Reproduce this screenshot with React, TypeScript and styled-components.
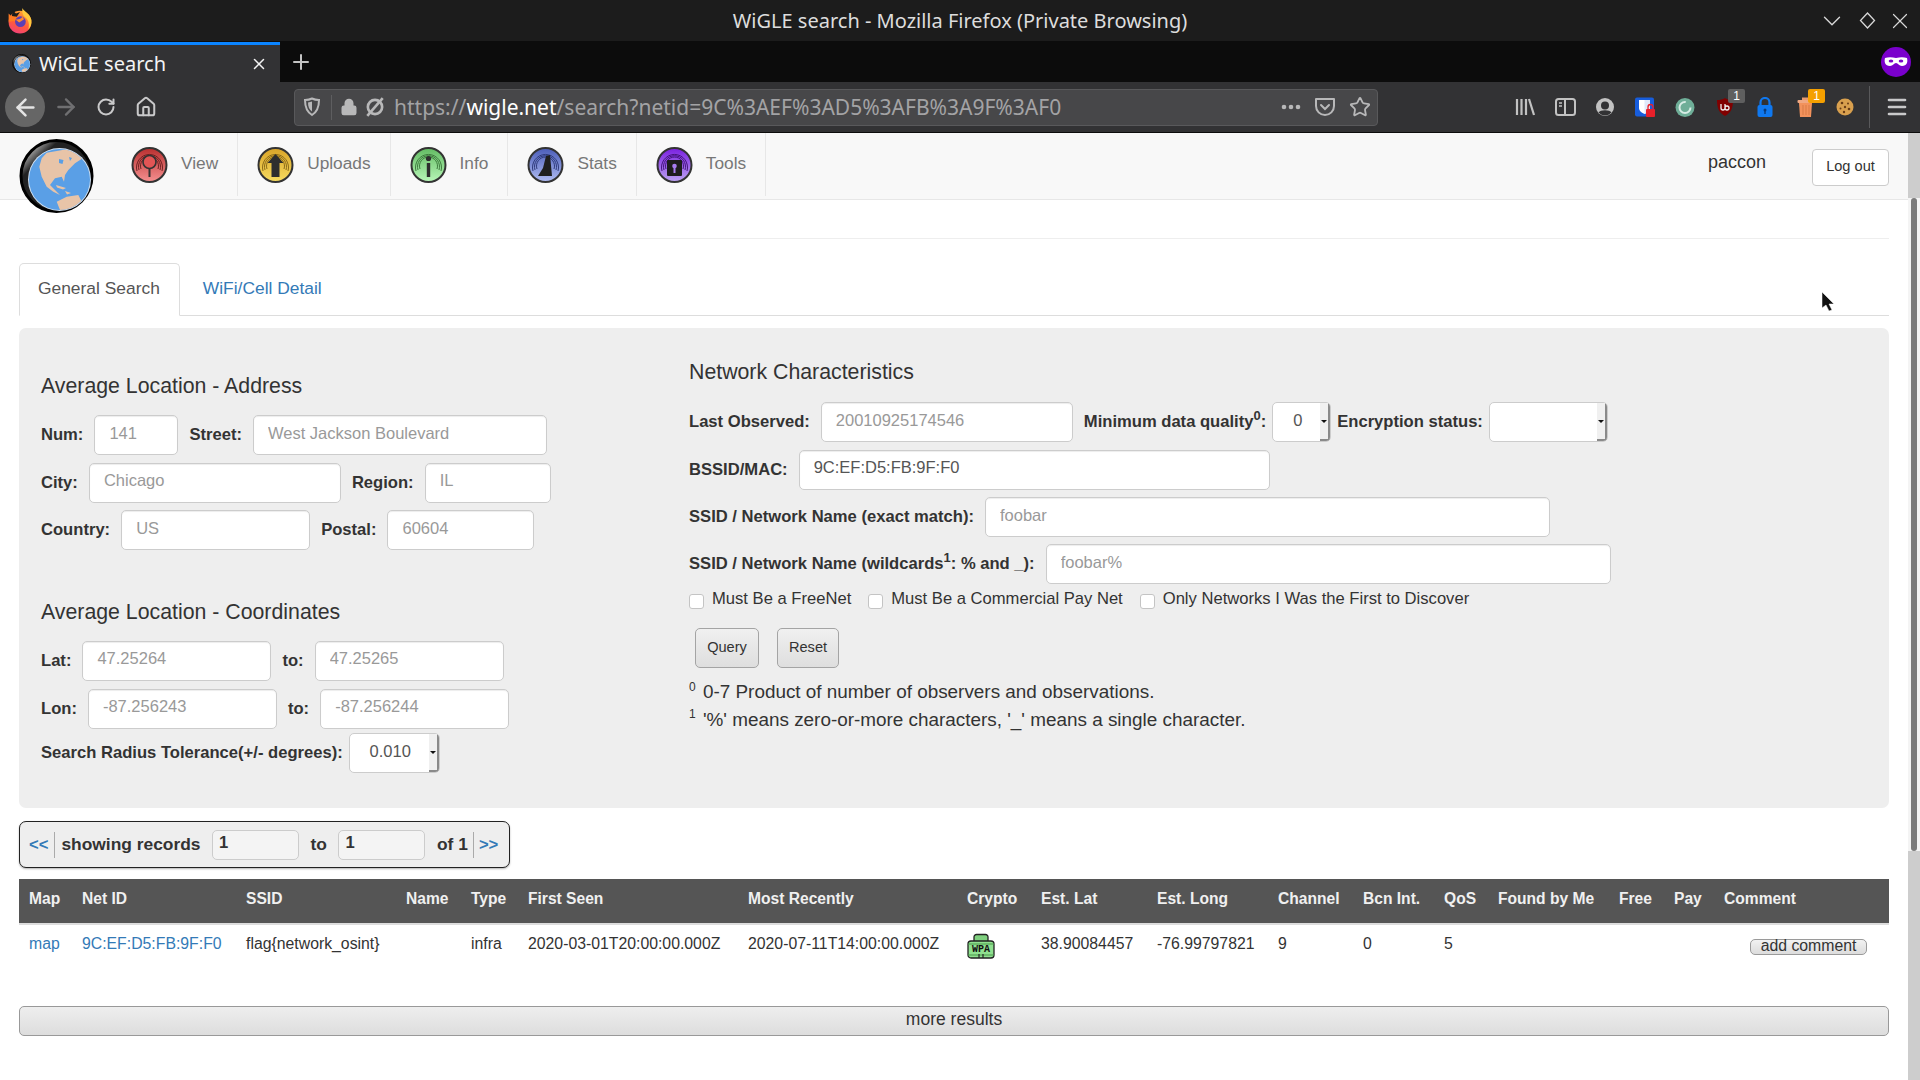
import React, { FC } from "react";
import styled, { createGlobalStyle } from "styled-components";
import { ArrowLeft, ArrowRight, RotateCw, Home, Star, X, Plus, Menu, Lock, ChevronDown } from "lucide-react";

const GlobalStyle = createGlobalStyle`
  html, body {
    margin: 0;
    padding: 0;
    height: 100%;
    overflow: hidden;
    background: #fff;
  }
  * { box-sizing: border-box; }
`;

const Win = styled.div`
  width: 1920px;
  height: 1080px;
  display: flex;
  flex-direction: column;
  overflow: hidden;
  font-family: "Liberation Sans", Arial, sans-serif;
  color: #333;
`;

/* ---------- browser chrome ---------- */
const TitleBar = styled.div`
  height: 41px;
  flex: none;
  background: #1c1c1c;
  display: grid;
  grid-template-columns: 200px 1fr 200px;
  align-items: center;
  color: #ddd;
  font-family: "Noto Sans", sans-serif;
  font-size: 20px;
`;

const TitleText = styled.div`
  text-align: center;
`;

const FoxSlot = styled.div`
  display: flex;
  padding-left: 7px;
  padding-bottom: 1px;
`;

const WinControls = styled.div`
  display: flex;
  justify-content: flex-end;
  align-items: center;
  gap: 11.5px;
  padding-right: 7px;
  color: #d8d8d8;
`;

const TabBar = styled.div`
  height: 41px;
  flex: none;
  background: #0c0c0c;
  display: flex;
  align-items: stretch;
`;

const ActiveTab = styled.div`
  width: 280px;
  margin-top: 1px;
  background: #323234;
  border-top: 3px solid #0a84ff;
  display: flex;
  align-items: center;
  padding: 0 12px;
  gap: 8px;
  color: #f4f4f4;
  font-family: "Noto Sans", sans-serif;
  font-size: 20px;
`;

const TabTitle = styled.span`
  flex: 1;
`;

const NewTab = styled.div`
  width: 42px;
  display: flex;
  align-items: center;
  justify-content: center;
  color: #c4c4c4;
`;

const TabSpacer = styled.div`
  flex: 1;
`;

const MaskSlot = styled.div`
  display: flex;
  align-items: center;
  padding-right: 9px;
`;

const ToolBar = styled.div`
  height: 51px;
  flex: none;
  background: #323234;
  border-bottom: 1px solid #0c0c0c;
  display: flex;
  align-items: center;
  padding-left: 5px;
`;

const ToolSlot = styled.div<{ $round?: boolean; $dim?: boolean }>`
  width: 40px;
  height: 40px;
  flex: none;
  display: flex;
  align-items: center;
  justify-content: center;
  position: relative;
  border-radius: 50%;
  margin-right: ${(p) => (p.$round ? "1px" : "0")};
  background: ${(p) => (p.$round ? "#666" : "transparent")};
  color: ${(p) => (p.$round ? "#e4e4e4" : p.$dim ? "#6f6f71" : "#c9c9ca")};
`;

const UrlBar = styled.div`
  width: 1084px;
  height: 37px;
  margin-left: 128px;
  flex: none;
  background: #474749;
  border: 1px solid #59595b;
  border-radius: 4px;
  display: flex;
  align-items: center;
  padding-left: 8px;
  color: #b8b8b9;
`;

const UrlDivider = styled.div`
  width: 1px;
  height: 25px;
  background: #5e5e60;
  margin: 0 8px 0 10px;
`;

const UrlIcons = styled.div`
  display: flex;
  gap: 6px;
  align-items: center;
  margin-right: 8px;
`;

const UrlText = styled.div`
  flex: 1;
  font-family: "Noto Sans", sans-serif;
  font-size: 21px;
  color: #a3a3a5;
  white-space: nowrap;
`;

const UrlHost = styled.span`
  color: #fff;
`;

const UrlActions = styled.div`
  display: flex;
  align-items: center;
  gap: 13px;
  padding-right: 6px;
`;

const ToolSpacer = styled.div`
  width: 127px;
  flex: none;
`;

const ToolDivider = styled.div`
  width: 1px;
  height: 42px;
  background: #59595b;
  margin: 0 7px 0 4px;
  flex: none;
`;

const Badge = styled.span<{ $bg: string }>`
  position: absolute;
  top: 2px;
  right: 0;
  width: 17px;
  height: 14px;
  border-radius: 2px;
  background: ${(p) => p.$bg};
  color: #fff;
  font-size: 12px;
  line-height: 14px;
  text-align: center;
`;

/* ---------- page ---------- */
const PageArea = styled.div`
  flex: 1;
  display: flex;
  min-height: 0;
  position: relative;
`;

const Content = styled.div`
  flex: 1;
  min-width: 0;
`;

const ScrollTrack = styled.div`
  width: 12px;
  flex: none;
  display: flex;
  flex-direction: column;
  background: #cdcdcd;
`;

const ScrollBody = styled.div`
  margin-top: 65px;
  height: 653px;
  background: #f4f4f4;
  display: flex;
  justify-content: center;
`;

const ScrollThumb = styled.div`
  width: 6px;
  background: #7b7b7b;
  border-radius: 3px;
`;

const NavBar = styled.div`
  height: 67px;
  background: #f8f8f8;
  border-bottom: 1px solid #e7e7e7;
  display: flex;
  padding-left: 112px;
  padding-right: 19px;
  position: relative;
`;

const LogoOver = styled.div`
  position: absolute;
  left: 19px;
  top: 6px;
  width: 75px;
  height: 75px;
`;

const NavItem = styled.div`
  height: 63px;
  display: flex;
  align-items: center;
  gap: 13px;
  padding: 0 19px;
  border-right: 1px solid #e7e7e7;
  color: #777;
  font-size: 17.3px;
`;

const NavLabel = styled.span`
  margin-bottom: 3px;
`;

const NavSpacer = styled.div`
  flex: 1;
`;

const UserName = styled.div`
  font-size: 18px;
  color: #333;
  align-self: center;
  margin: 0 46px 7px 0;
`;

const LogoutButton = styled.button`
  align-self: flex-start;
  margin-top: 16px;
  width: 77px;
  height: 37px;
  background: #fff;
  border: 1px solid #ccc;
  border-radius: 4px;
  font: 14.6px "Liberation Sans", Arial, sans-serif;
  color: #333;
  padding: 0 0 3px;
`;

const Main = styled.div`
  padding: 38px 19px 0;
`;

const Rule = styled.div`
  height: 1px;
  background: #eee;
`;

const Tabs = styled.div`
  margin-top: 24px;
  height: 53px;
  border-bottom: 1px solid #ddd;
  display: flex;
`;

const TabLink = styled.div<{ $active?: boolean }>`
  height: 53px;
  padding: 0 19px 2px 18px;
  display: flex;
  align-items: center;
  font-size: 17.4px;
  color: ${(p) => (p.$active ? "#555" : "#337ab7")};
  background: ${(p) => (p.$active ? "#fff" : "transparent")};
  border: 1px solid ${(p) => (p.$active ? "#ddd" : "transparent")};
  border-bottom-color: ${(p) => (p.$active ? "#fff" : "transparent")};
  border-radius: 5px 5px 0 0;
  margin-right: 4px;
`;

const Panel = styled.div`
  margin-top: 12px;
  height: 480px;
  background: #eee;
  border-radius: 7px;
  display: flex;
  padding-left: 22px;
`;

const LeftCol = styled.div`
  width: 648px;
  flex: none;
  padding-top: 46px;
`;

const RightCol = styled.div`
  flex: 1;
  padding-top: 32px;
`;

const Heading = styled.h4<{ $above?: number; $below?: number }>`
  margin: ${(p) => p.$above ?? 0}px 0 ${(p) => p.$below ?? 17}px;
  font-size: 21.3px;
  line-height: 24px;
  font-weight: 400;
  color: #333;
`;

const FormRow = styled.div<{ $below?: number }>`
  display: flex;
  align-items: center;
  height: 40px;
  gap: 11px;
  margin-bottom: ${(p) => p.$below ?? 7.7}px;
`;

const TightGroup = styled.div`
  display: flex;
  align-items: center;
  gap: 6px;
`;

const Label = styled.label`
  font-size: 16.6px;
  font-weight: 700;
  color: #333;
  white-space: nowrap;
`;

const Sup = styled.sup`
  font-size: 13px;
  line-height: 0;
`;

const NoteSup = styled(Sup)`
  font-size: 12px;
  margin-right: 2px;
`;

const TextInput = styled.input<{ $w: number }>`
  width: ${(p) => p.$w}px;
  height: 40px;
  flex: none;
  background: #fff;
  border: 1px solid #ccc;
  border-radius: 5px;
  box-shadow: inset 0 1px 1px rgba(0, 0, 0, 0.075);
  padding: 0 14px 4px;
  font: 16.5px "Liberation Sans", Arial, sans-serif;
  color: #555;
  &::placeholder {
    color: #999;
    opacity: 1;
  }
`;

const SelectBox = styled.div<{ $w: number }>`
  width: ${(p) => p.$w}px;
  height: 40px;
  flex: none;
  background: #fff;
  border: 1px solid #ccc;
  border-radius: 5px;
  display: flex;
  align-items: center;
  font-size: 16.5px;
  color: #555;
  overflow: hidden;
`;

const SelectValue = styled.span`
  flex: 1;
  text-align: center;
  padding: 0 0 4px 2px;
`;

const SelectArrow = styled.span`
  width: 10px;
  height: 100%;
  flex: none;
  background: #f0f0f0;
  border-right: 2px solid #8a8a8a;
  border-bottom: 2px solid #8a8a8a;
  display: flex;
  align-items: center;
  justify-content: center;
  &::after {
    content: "";
    border-left: 3px solid transparent;
    border-right: 3px solid transparent;
    border-top: 3px solid #111;
  }
`;

const CheckRow = styled.div`
  display: flex;
  align-items: flex-start;
  height: 20px;
  margin-top: 1px;
`;

const CheckBox = styled.input.attrs({ type: "checkbox" })`
  appearance: none;
  width: 15px;
  height: 15px;
  margin: 5px 8px 0 0;
  flex: none;
  background: #fff;
  border: 1px solid #c4c4c4;
  border-radius: 3px;
`;

const CheckLabel = styled.span`
  font-size: 16.6px;
  line-height: 19px;
  color: #333;
  margin-right: 17px;
`;

const ButtonRow = styled.div`
  display: flex;
  gap: 18px;
  margin: 19px 0 10px 6px;
`;

const FormButton = styled.button<{ $w: number }>`
  width: ${(p) => p.$w}px;
  height: 40px;
  padding: 0 0 3px;
  background: linear-gradient(#f0f0f0, #dedede);
  border: 1px solid #a4a4a4;
  border-radius: 5px;
  font: 14.6px "Liberation Sans", Arial, sans-serif;
  color: #333;
`;

const Note = styled.div`
  font-size: 18.9px;
  line-height: 27.5px;
  color: #333;
`;

const Pager = styled.div`
  margin-top: 13px;
  width: 491px;
  height: 47px;
  background: #eee;
  border: 1px solid #222;
  border-radius: 7px;
  box-shadow: 0 1px 2px rgba(0, 0, 0, 0.3);
  display: flex;
  align-items: center;
  padding-left: 9px;
  font-size: 17.4px;
  font-weight: 700;
  color: #333;
`;

const PagerLink = styled.span`
  color: #337ab7;
  font-size: 16.6px;
`;

const PagerSep = styled.span<{ $side: "left" | "right" }>`
  width: 1px;
  height: 26px;
  background: #aaa;
  margin: ${(p) => (p.$side === "left" ? "0 6px" : "0 5px")};
`;

const PagerInput = styled.input`
  width: 87px;
  height: 30px;
  margin: 0 11.5px;
  background: #f4f4f4;
  border: 1px solid #ccc;
  border-radius: 5px;
  padding: 0 6px 3px;
  font: 700 16.6px "Liberation Sans", Arial, sans-serif;
  color: #333;
`;

const ResultTable = styled.table`
  margin-top: 11px;
  width: 1870px;
  table-layout: fixed;
  border-collapse: collapse;
  font-size: 15.8px;
`;

const HeadRow = styled.tr`
  height: 45px;
  background: #555;
  border-bottom: 2px solid #ddd;
`;

const Th = styled.th`
  padding: 0 0 4px 10px;
  text-align: left;
  font-size: 15.6px;
  font-weight: 700;
  color: #f0f0f0;
  white-space: nowrap;
`;

const BodyRow = styled.tr`
  height: 70px;
`;

const Td = styled.td`
  padding: 10px 0 0 10px;
  vertical-align: top;
  color: #333;
  white-space: nowrap;
  line-height: 18px;
`;

const IconCell = styled(Td)`
  padding-top: 8px;
`;

const CommentCell = styled(Td)`
  padding: 14px 22px 0 0;
  text-align: right;
`;

const CellLink = styled.span`
  color: #337ab7;
`;

const CommentButton = styled.button`
  display: inline-block;
  vertical-align: top;
  width: 117px;
  height: 16px;
  padding: 0 0 5px;
  background: linear-gradient(#f2f2f2, #dcdcdc);
  border: 1px solid #9a9a9a;
  border-radius: 5px;
  font: 15.8px/12px "Liberation Sans", Arial, sans-serif;
  color: #333;
`;

const MoreButton = styled.button`
  display: block;
  width: 100%;
  height: 30px;
  margin-top: 12px;
  padding: 0 0 4px;
  background: linear-gradient(#eee, #ddd);
  border: 1px solid #999;
  border-radius: 5px;
  font: 17.5px "Liberation Sans", Arial, sans-serif;
  color: #333;
`;

const Cursor = styled.svg`
  position: absolute;
  left: 1821px;
  top: 159px;
`;

/* ---------- drawings ---------- */
const FirefoxLogo: FC = () => (
  <svg width="26" height="27" viewBox="0 0 32 33">
    <defs>
      <linearGradient id="ffBody" x1="0.7" y1="0" x2="0.3" y2="1">
        <stop offset="0" stopColor="#ffa930" />
        <stop offset="0.6" stopColor="#ff5a3c" />
        <stop offset="1" stopColor="#f0407a" />
      </linearGradient>
    </defs>
    <circle cx="16" cy="18.5" r="14" fill="url(#ffBody)" />
    <path d="M19 1c1 4 10 7 11 15 .6 5-1 9-4 12 2-6 1-12-3-15-3-2-5-6-4-12z" fill="#ffc93c" />
    <path d="M2 8l3 3 3-3 2 4 5-3-5 8-8 1z" fill="#ff7a22" />
    <path d="M7 4l4 4 5-2-4 6-6-1z" fill="#1c1c1c" />
    <circle cx="16.5" cy="18" r="6.6" fill="#5b3fb5" />
    <path d="M10 15c3 1 7 0 9-3l2 3-6 4z" fill="#ff8a2c" />
  </svg>
);

const Globe: FC<{ size: number }> = ({ size }) => (
  <svg width={size} height={size} viewBox="0 0 75 75">
    <defs>
      <linearGradient id={`shine${size}`} x1="0" y1="0" x2="0.7" y2="0.7">
        <stop offset="0" stopColor="#111" />
        <stop offset="0.22" stopColor="#999" />
        <stop offset="0.38" stopColor="#222" />
      </linearGradient>
      <clipPath id={`sea${size}`}>
        <circle cx="40.5" cy="40.5" r="30.5" />
      </clipPath>
    </defs>
    <circle cx="37.5" cy="37" r="35.5" fill={`url(#shine${size})`} stroke="#000" strokeWidth="3" />
    <circle cx="40.5" cy="40.5" r="31.5" fill="#cfe0f2" />
    <g clipPath={`url(#sea${size})`}>
      <rect x="0" y="0" width="75" height="75" fill="#5a9fe6" />
      <path
        d="M27.7 13.7L47.7 10.3L59.3 11.7L63.7 19.3L56 24.3L49.3 31L46 36L45 42.7L42.7 37.7L36 39.3L31 46L36 51L41 56L34.3 52.7L27.7 47.7L22.7 37.7L20.3 27.7L22.7 19.3Z"
        fill="#e8c4a8"
      />
      <path d="M40 20L44.5 21L43.5 25L40 24ZM50 18L53 19L51 22Z" fill="#5a9fe6" />
      <path d="M37 46L47 49L44 50.5L38 48.5ZM46 52L52 54L48 55.5Z" fill="#e8c4a8" />
      <path d="M37.7 62.7L47.7 57.7L59.3 56L62.7 62.7L51 71L41 71Z" fill="#e8c4a8" />
    </g>
  </svg>
);

const NavIcon: FC<{ id: string; top: string; bottom: string; arc: string; children: React.ReactNode }> = ({
  id,
  top,
  bottom,
  arc,
  children,
}) => (
  <svg width="37" height="36" viewBox="0 0 37 36">
    <defs>
      <linearGradient id={id} x1="0" y1="0" x2="0" y2="1">
        <stop offset="0" stopColor={top} />
        <stop offset="1" stopColor={bottom} />
      </linearGradient>
    </defs>
    <circle cx="18.5" cy="18" r="17" fill={`url(#${id})`} stroke="#333" strokeWidth="2" />
    <g fill="none" stroke={arc} strokeWidth="1">
      <path d="M6 24a13 13 0 1 1 25 0" />
      <path d="M8 23a11 11 0 1 1 21 0" />
      <path d="M10 22a9 9 0 1 1 17 0" />
    </g>
    {children}
  </svg>
);

const ViewGlyph = () => (
  <g fill="none" stroke="#333" strokeWidth="1.6">
    <circle cx="18.5" cy="15" r="6.5" fill="#e25555" />
    <path d="M18.5 21.5V30" strokeWidth="2" />
  </g>
);
const UploadGlyph = () => <path d="M18.5 7l8 9h-4v14h-8V16h-4z" fill="#2e2e2e" />;
const InfoGlyph = () => (
  <g fill="#2e2e2e">
    <circle cx="18.5" cy="11.5" r="2.6" />
    <rect x="16.8" y="16" width="3.4" height="14" />
  </g>
);
const StatsGlyph = () => <path d="M11 29l5-8 3-12 4-1 2 21z" fill="#1f1f1f" />;
const ToolsGlyph = () => (
  <g>
    <rect x="11" y="13" width="15" height="16" rx="1" fill="#1d1d1d" />
    <circle cx="18.5" cy="19" r="2.3" fill="#a77cf0" />
    <rect x="17.5" y="20" width="2" height="6" fill="#a77cf0" />
  </g>
);

const ShieldIcon = () => (
  <svg width="18" height="20" viewBox="0 0 18 20" fill="none">
    <path d="M9 1.5c2 1 5 1.5 7 1.5 0 8-2 12-7 15-5-3-7-7-7-15 2 0 5-.5 7-1.5z" stroke="#b8b8b9" strokeWidth="2" />
    <path d="M9 4.5v10c-3-2-4-5-4-9z" fill="#b8b8b9" />
  </svg>
);

const BrokenLink = () => (
  <svg width="22" height="22" viewBox="0 0 20 20" fill="none" stroke="#b8b8b9" strokeWidth="2.4">
    <circle cx="10" cy="10" r="6.5" />
    <path d="M3 18L17 2" />
  </svg>
);

const PocketIcon = () => (
  <svg width="22" height="20" viewBox="0 0 22 20" fill="none" stroke="#b8b8b9" strokeWidth="2">
    <path d="M2 2h18v7c0 5-4 9-9 9s-9-4-9-9z" strokeLinejoin="round" />
    <path d="M7 8l4 4 4-4" strokeLinecap="round" />
  </svg>
);

const LibraryIcon = () => (
  <svg width="21" height="20" viewBox="0 0 21 20" fill="none" stroke="#c2c2c2" strokeWidth="2.2">
    <path d="M2 2v16M6.5 2v16M11 2v16M14 2l5 16" />
  </svg>
);

const SidebarIcon = () => (
  <svg width="21" height="20" viewBox="0 0 21 20" fill="none" stroke="#c2c2c2" strokeWidth="2">
    <rect x="1" y="2" width="19" height="16" rx="2.5" />
    <path d="M10 2v16" />
    <path d="M4 6h3M4 9h3" strokeWidth="1.4" />
  </svg>
);

const AccountIcon = () => (
  <svg width="20" height="20" viewBox="0 0 20 20">
    <circle cx="10" cy="10" r="9" fill="#c2c2c2" />
    <circle cx="10" cy="8.5" r="4" fill="#323234" />
    <path d="M3.5 15.5c2-3 11-3 13 0-2 2-4 3-6.5 3s-4.5-1-6.5-3z" fill="#323234" />
  </svg>
);

const BitwardenIcon = () => (
  <svg width="22" height="21" viewBox="0 0 22 21">
    <rect x="1" y="0.5" width="19" height="19" rx="2" fill="#175ddc" />
    <path d="M5 3h11v8c0 3-3 5-5.5 6C8 16 5 14 5 11z" fill="#fff" />
    <path d="M10.5 3h5.5v8c0 3-3 5-5.5 6z" fill="#dfe9fb" />
    <rect x="12" y="12" width="9" height="8" rx="1" fill="#e8202a" />
    <path d="M14 12V10a2.5 2.5 0 0 1 5 0v2" fill="none" stroke="#e8202a" strokeWidth="1.3" />
  </svg>
);

const GreenRing = () => (
  <svg width="20" height="21" viewBox="0 0 20 21" fill="none">
    <circle cx="10" cy="10.5" r="9.5" fill="#6fae98" />
    <circle cx="10" cy="10.5" r="5.5" stroke="#d8ece5" strokeWidth="2" strokeDasharray="26 8" />
  </svg>
);

const UblockIcon = () => (
  <svg width="18" height="20" viewBox="0 0 18 20">
    <path d="M9 1c2 1.5 5 2 8 2 0 8-2 13-8 16C3 16 1 11 1 3c3 0 6-.5 8-2z" fill="#800000" />
    <path d="M5 7v4a2 2 0 0 0 4 0V7M9 11a2 2 0 1 0 4 0 2 2 0 1 0-4 0" fill="none" stroke="#eee" strokeWidth="1.3" />
  </svg>
);

const BlueLock = () => (
  <svg width="16" height="20" viewBox="0 0 16 20">
    <path d="M3.5 9V5.5a4.5 4.5 0 0 1 9 0V9" fill="none" stroke="#0f78f0" strokeWidth="2.2" />
    <rect x="0.5" y="8" width="15" height="12" rx="2" fill="#0f78f0" />
    <circle cx="8" cy="13" r="1.5" fill="#0a3a78" />
    <rect x="7.3" y="13" width="1.4" height="4" fill="#0a3a78" />
  </svg>
);

const TrashIcon = () => (
  <svg width="17" height="20" viewBox="0 0 17 20">
    <rect x="5" y="0.5" width="7" height="3" fill="#e89a70" />
    <rect x="0.5" y="3" width="16" height="3" rx="1" fill="#f0a882" />
    <path d="M2 6h13l-1 14H3z" fill="#f2925c" />
    <path d="M6 8v10M9 8v10M12 8v10" stroke="#d87a44" strokeWidth="1" />
  </svg>
);

const CookieIcon = () => (
  <svg width="18" height="18" viewBox="0 0 18 18">
    <circle cx="9" cy="9" r="8.5" fill="#d9a04e" />
    <g fill="#6a3d16">
      <circle cx="6" cy="5" r="1.3" />
      <circle cx="12" cy="5.5" r="1" />
      <circle cx="9" cy="9" r="1.2" />
      <circle cx="4.5" cy="10.5" r="1" />
      <circle cx="13" cy="11" r="1.3" />
      <circle cx="8" cy="14" r="1.2" />
    </g>
  </svg>
);

const MaskIcon = () => (
  <svg width="30" height="30" viewBox="0 0 30 30">
    <circle cx="15" cy="15" r="15" fill="#7a00cc" />
    <path d="M4 11c3-1 7-1 11 0 4-1 8-1 11 0 1 4 0 8-5 8-3 0-4-3-6-3s-3 3-6 3c-5 0-6-4-5-8z" fill="#fff" />
    <ellipse cx="10" cy="14" rx="2.3" ry="1.5" fill="#7a00cc" />
    <ellipse cx="20" cy="14" rx="2.3" ry="1.5" fill="#7a00cc" />
  </svg>
);

const DiamondIcon = () => (
  <svg width="17" height="17" viewBox="0 0 17 17" fill="none" stroke="#d8d8d8" strokeWidth="1.3">
    <path d="M8.5 1l7 7.5-7 7.5-7-7.5z" />
  </svg>
);

const DotsIcon = () => (
  <svg width="20" height="6" viewBox="0 0 20 6" fill="#b8b8b9">
    <circle cx="3" cy="3" r="2.3" />
    <circle cx="10" cy="3" r="2.3" />
    <circle cx="17" cy="3" r="2.3" />
  </svg>
);

const WpaIcon = () => (
  <svg width="28" height="26" viewBox="0 0 28 26">
    <path d="M7 9V4a2.5 2.5 0 0 1 2.5-2.5h9A2.5 2.5 0 0 1 21 4v5" fill="#7fd07f" stroke="#222" strokeWidth="1.3" />
    <rect x="1" y="8" width="26" height="17" rx="3" fill="#8fe08f" stroke="#222" strokeWidth="1.3" />
    <path d="M1 11h26M1 22h26" stroke="#4a9a4a" strokeWidth="1" />
    <text x="14" y="18.5" textAnchor="middle" fontSize="10" fontWeight="700" fontFamily="Liberation Mono, monospace" fill="#111">
      WPA
    </text>
    <path d="M12 21v4M16 21v4" stroke="#222" strokeWidth="1.2" />
  </svg>
);

const TABLE_COLS = [53, 164, 160, 65, 57, 220, 219, 74, 116, 121, 85, 81, 54, 121, 55, 50, 175];
const TABLE_HEADS = [
  "Map",
  "Net ID",
  "SSID",
  "Name",
  "Type",
  "First Seen",
  "Most Recently",
  "Crypto",
  "Est. Lat",
  "Est. Long",
  "Channel",
  "Bcn Int.",
  "QoS",
  "Found by Me",
  "Free",
  "Pay",
  "Comment",
];

const App: FC = () => (
  <Win>
    <GlobalStyle />
    <TitleBar>
      <FoxSlot>
        <FirefoxLogo />
      </FoxSlot>
      <TitleText>WiGLE search - Mozilla Firefox (Private Browsing)</TitleText>
      <WinControls>
        <ChevronDown size={30} strokeWidth={1.1} />
        <DiamondIcon />
        <X size={26} strokeWidth={1.1} />
      </WinControls>
    </TitleBar>

    <TabBar>
      <ActiveTab>
        <Globe size={19} />
        <TabTitle>WiGLE search</TabTitle>
        <X size={18} strokeWidth={2} />
      </ActiveTab>
      <NewTab>
        <Plus size={24} strokeWidth={2} />
      </NewTab>
      <TabSpacer />
      <MaskSlot>
        <MaskIcon />
      </MaskSlot>
    </TabBar>

    <ToolBar>
      <ToolSlot $round>
        <ArrowLeft size={27} strokeWidth={2.2} />
      </ToolSlot>
      <ToolSlot $dim>
        <ArrowRight size={26} strokeWidth={2.2} />
      </ToolSlot>
      <ToolSlot>
        <RotateCw size={20} strokeWidth={2.4} />
      </ToolSlot>
      <ToolSlot>
        <Home size={22} strokeWidth={2.2} />
      </ToolSlot>
      <UrlBar>
        <ShieldIcon />
        <UrlDivider />
        <UrlIcons>
          <Lock size={18} fill="#b8b8b9" strokeWidth={2} />
          <BrokenLink />
        </UrlIcons>
        <UrlText>
          https://<UrlHost>wigle.net</UrlHost>/search?netid=9C%3AEF%3AD5%3AFB%3A9F%3AF0
        </UrlText>
        <UrlActions>
          <DotsIcon />
          <PocketIcon />
          <Star size={22} strokeWidth={2} />
        </UrlActions>
      </UrlBar>
      <ToolSpacer />
      <ToolSlot>
        <LibraryIcon />
      </ToolSlot>
      <ToolSlot>
        <SidebarIcon />
      </ToolSlot>
      <ToolSlot>
        <AccountIcon />
      </ToolSlot>
      <ToolSlot>
        <BitwardenIcon />
      </ToolSlot>
      <ToolSlot>
        <GreenRing />
      </ToolSlot>
      <ToolSlot>
        <UblockIcon />
        <Badge $bg="#5f5f5f">1</Badge>
      </ToolSlot>
      <ToolSlot>
        <BlueLock />
      </ToolSlot>
      <ToolSlot>
        <TrashIcon />
        <Badge $bg="#f5a000">1</Badge>
      </ToolSlot>
      <ToolSlot>
        <CookieIcon />
      </ToolSlot>
      <ToolDivider />
      <ToolSlot>
        <Menu size={24} strokeWidth={2.6} />
      </ToolSlot>
    </ToolBar>

    <PageArea>
      <Content>
        <NavBar>
          <LogoOver>
            <Globe size={75} />
          </LogoOver>
          <NavItem>
            <NavIcon id="navView" top="#b92f2f" bottom="#f59090" arc="#6e2020">
              <ViewGlyph />
            </NavIcon>
            <NavLabel>View</NavLabel>
          </NavItem>
          <NavItem>
            <NavIcon id="navUp" top="#d9a428" bottom="#f7dc60" arc="#8a6a18">
              <UploadGlyph />
            </NavIcon>
            <NavLabel>Uploads</NavLabel>
          </NavItem>
          <NavItem>
            <NavIcon id="navInfo" top="#62bb62" bottom="#b8f7b8" arc="#3d7a3d">
              <InfoGlyph />
            </NavIcon>
            <NavLabel>Info</NavLabel>
          </NavItem>
          <NavItem>
            <NavIcon id="navStats" top="#4a5cb8" bottom="#b0bcf2" arc="#2e3a7a">
              <StatsGlyph />
            </NavIcon>
            <NavLabel>Stats</NavLabel>
          </NavItem>
          <NavItem>
            <NavIcon id="navTools" top="#7a1fe0" bottom="#bca4f2" arc="#44127e">
              <ToolsGlyph />
            </NavIcon>
            <NavLabel>Tools</NavLabel>
          </NavItem>
          <NavSpacer />
          <UserName>paccon</UserName>
          <LogoutButton>Log out</LogoutButton>
        </NavBar>

        <Main>
          <Rule />
          <Tabs>
            <TabLink $active>General Search</TabLink>
            <TabLink>WiFi/Cell Detail</TabLink>
          </Tabs>

          <Panel>
            <LeftCol>
              <Heading>Average Location - Address</Heading>
              <FormRow>
                <Label>Num:</Label>
                <TextInput $w={84} placeholder="141" />
                <Label>Street:</Label>
                <TextInput $w={294} placeholder="West Jackson Boulevard" />
              </FormRow>
              <FormRow>
                <Label>City:</Label>
                <TextInput $w={252} placeholder="Chicago" />
                <Label>Region:</Label>
                <TextInput $w={126} placeholder="IL" />
              </FormRow>
              <FormRow>
                <Label>Country:</Label>
                <TextInput $w={189} placeholder="US" />
                <Label>Postal:</Label>
                <TextInput $w={147} placeholder="60604" />
              </FormRow>
              <Heading $above={49.5}>Average Location - Coordinates</Heading>
              <FormRow>
                <Label>Lat:</Label>
                <TextInput $w={189} placeholder="47.25264" />
                <Label>to:</Label>
                <TextInput $w={189} placeholder="47.25265" />
              </FormRow>
              <FormRow $below={4.5}>
                <Label>Lon:</Label>
                <TextInput $w={189} placeholder="-87.256243" />
                <Label>to:</Label>
                <TextInput $w={189} placeholder="-87.256244" />
              </FormRow>
              <TightGroup>
                <Label>Search Radius Tolerance(+/- degrees):</Label>
                <SelectBox $w={91}>
                  <SelectValue>0.010</SelectValue>
                  <SelectArrow />
                </SelectBox>
              </TightGroup>
            </LeftCol>

            <RightCol>
              <Heading $below={18}>Network Characteristics</Heading>
              <FormRow>
                <Label>Last Observed:</Label>
                <TextInput $w={252} placeholder="20010925174546" />
                <TightGroup>
                  <Label>
                    Minimum data quality<Sup>0</Sup>:
                  </Label>
                  <SelectBox $w={59}>
                    <SelectValue>0</SelectValue>
                    <SelectArrow />
                  </SelectBox>
                  <Label>Encryption status:</Label>
                  <SelectBox $w={119}>
                    <SelectValue />
                    <SelectArrow />
                  </SelectBox>
                </TightGroup>
              </FormRow>
              <FormRow>
                <Label>BSSID/MAC:</Label>
                <TextInput $w={471} defaultValue="9C:EF:D5:FB:9F:F0" />
              </FormRow>
              <FormRow $below={7}>
                <Label>SSID / Network Name (exact match):</Label>
                <TextInput $w={565} placeholder="foobar" />
              </FormRow>
              <FormRow $below={4.7}>
                <Label>
                  SSID / Network Name (wildcards<Sup>1</Sup>: % and _):
                </Label>
                <TextInput $w={565} placeholder="foobar%" />
              </FormRow>
              <CheckRow>
                <CheckBox />
                <CheckLabel>Must Be a FreeNet</CheckLabel>
                <CheckBox />
                <CheckLabel>Must Be a Commercial Pay Net</CheckLabel>
                <CheckBox />
                <CheckLabel>Only Networks I Was the First to Discover</CheckLabel>
              </CheckRow>
              <ButtonRow>
                <FormButton $w={64}>Query</FormButton>
                <FormButton $w={62}>Reset</FormButton>
              </ButtonRow>
              <Note>
                <NoteSup>0</NoteSup> 0-7 Product of number of observers and observations.
              </Note>
              <Note>
                <NoteSup>1</NoteSup> '%' means zero-or-more characters, '_' means a single character.
              </Note>
            </RightCol>
          </Panel>

          <Pager>
            <PagerLink>&lt;&lt;</PagerLink>
            <PagerSep $side="left" />
            showing records
            <PagerInput defaultValue="1" />
            to
            <PagerInput defaultValue="1" />
            of 1
            <PagerSep $side="right" />
            <PagerLink>&gt;&gt;</PagerLink>
          </Pager>

          <ResultTable>
            <colgroup>
              {TABLE_COLS.map((w, i) => (
                <col key={i} width={w} />
              ))}
            </colgroup>
            <thead>
              <HeadRow>
                {TABLE_HEADS.map((h) => (
                  <Th key={h}>{h}</Th>
                ))}
              </HeadRow>
            </thead>
            <tbody>
              <BodyRow>
                <Td>
                  <CellLink>map</CellLink>
                </Td>
                <Td>
                  <CellLink>9C:EF:D5:FB:9F:F0</CellLink>
                </Td>
                <Td>flag{"{"}network_osint{"}"}</Td>
                <Td />
                <Td>infra</Td>
                <Td>2020-03-01T20:00:00.000Z</Td>
                <Td>2020-07-11T14:00:00.000Z</Td>
                <IconCell>
                  <WpaIcon />
                </IconCell>
                <Td>38.90084457</Td>
                <Td>-76.99797821</Td>
                <Td>9</Td>
                <Td>0</Td>
                <Td>5</Td>
                <Td />
                <Td />
                <Td />
                <CommentCell>
                  <CommentButton>add comment</CommentButton>
                </CommentCell>
              </BodyRow>
            </tbody>
          </ResultTable>

          <MoreButton>more results</MoreButton>
        </Main>
      </Content>

      <ScrollTrack>
        <ScrollBody>
          <ScrollThumb />
        </ScrollBody>
      </ScrollTrack>

      <Cursor width="14" height="20" viewBox="0 0 14 20">
        <path d="M1 0v16l4-3 3 6 3-1-3-6h5z" fill="#111" stroke="#fff" strokeWidth="0.5" />
      </Cursor>
    </PageArea>
  </Win>
);

export default App;
